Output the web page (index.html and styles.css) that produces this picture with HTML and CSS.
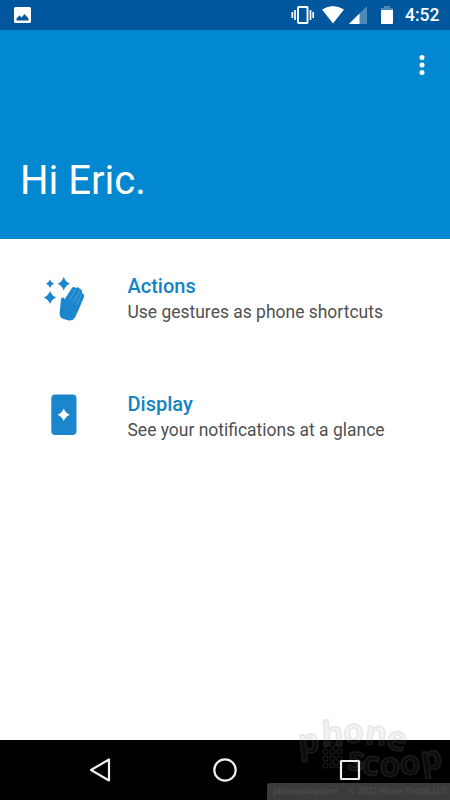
FILE: index.html
```html
<!DOCTYPE html>
<html lang="en">
<head>
<meta charset="utf-8">
<title>Hi Eric.</title>
<link rel="stylesheet" href="styles.css">
</head>
<body>
<div class="phone">
  <div class="status">
    <svg class="photo" viewBox="0 0 17 16" width="17" height="16"><rect width="17" height="16" rx="1.5" fill="#fff"/><path d="M2.500 13.500v-2l3-3 2 2 3-3.500 4 4.500v2z" fill="#00579d"/></svg>
    <svg class="vibrate" viewBox="0 0 24 18" width="24" height="18" fill="none" stroke="#fff"><rect x="7" y="1" width="9.500" height="16" rx=".5" stroke-width="1.900"/><path d="M1.300 6v6M4 4v10M19.500 4v10M22.200 6v6" stroke-width="1.700"/></svg>
    <svg class="wifi" viewBox="0 0 22 18" width="22" height="18"><path d="M0 3.500Q11-3.500 22 3.500L11 17.500z" fill="#fff"/></svg>
    <svg class="signal" viewBox="0 0 18 18" width="18" height="18"><path d="M18 0v18H0z" fill="#4d8aba"/><path d="M10.500 7.500V18H0z" fill="#fff"/></svg>
    <svg class="battery" viewBox="0 0 12 18" width="12" height="18"><path d="M0 4V2h3V0h6v2h3v2z" fill="#4d8aba"/><path d="M0 4h12v13q0 1-1 1H1q-1 0-1-1z" fill="#fff"/></svg>
    <span class="time">4:52</span>
  </div>
  <header class="hero">
    <svg class="more" viewBox="0 0 6 20" width="6" height="20" fill="#fff"><circle cx="3" cy="2.500" r="2.500"/><circle cx="3" cy="10" r="2.500"/><circle cx="3" cy="17.500" r="2.500"/></svg>
    <h1 class="greeting">Hi Eric.</h1>
  </header>
  <main class="list">
    <section class="item">
      <svg class="icon" viewBox="0 0 60 60" width="60" height="60" fill="#1b86cb">
        <path d="M15 9.500Q16 12.700 19 13.700Q16 14.700 15 18Q14 14.700 11 13.700Q14 12.700 15 9.500zM28.700 7Q30.500 12 35 13.700Q30.500 15.500 28.700 20.500Q27 15.500 22.500 13.700Q27 12 28.700 7zM15 21Q16.800 25.800 21.300 27.500Q16.800 29.200 15 34Q13.200 29.200 8.700 27.500Q13.200 25.800 15 21z"/>
        <path d="M25 46Q24.300 43 25 39.500L26 29.500Q26.500 27 28.500 27.500Q29.500 28 29.500 29.500L36.500 18.500Q38.500 16 40.700 18Q43.500 16 45 19Q47.800 19.500 46.800 23Q50.200 24 48.800 27.500L43.500 40L40 47.500Q37.500 51.500 33 50.300L28 48.700Q25.500 48 25 46z"/>
        <path d="M40.800 19L34.500 30M44.800 20.500L38 33M46.800 24L41.500 35" fill="none" stroke="#6fb3dd" stroke-width=".6"/>
      </svg>
      <div class="copy"><h2>Actions</h2><p>Use gestures as phone shortcuts</p></div>
    </section>
    <section class="item">
      <svg class="icon" viewBox="0 0 60 60" width="60" height="60"><rect x="16.300" y="6.500" width="25.200" height="40.500" rx="4" fill="#1b86cb"/><path d="M28.700 20.500Q30.500 25 35 26.800Q30.500 28.500 28.700 33Q27 28.500 22.500 26.800Q27 25 28.700 20.500z" fill="#fff"/></svg>
      <div class="copy"><h2>Display</h2><p>See your notifications at a glance</p></div>
    </section>
  </main>
  <nav class="nav">
    <svg viewBox="0 0 24 24" width="24" height="24"><path d="M21 1.500v21L3 12z"/></svg>
    <svg viewBox="0 0 24 24" width="24" height="24"><circle cx="12" cy="12" r="10.700"/></svg>
    <svg viewBox="0 0 24 24" width="24" height="24"><rect x="3" y="3" width="18" height="18" rx=".5"/></svg>
  </nav>
  <svg class="mark" viewBox="0 0 195 95" width="195" height="95">
    <defs>
      <pattern id="dots" x="67" y="36" width="7" height="7" patternUnits="userSpaceOnUse"><circle cx="3.500" cy="3.500" r="2.600" class="dot"/></pattern>
    </defs>
    <text class="logo" x="44 67 88 109 130" y="49 41 38 39 43" rotate="-6 -3 0 5 12">phone</text>
    <rect x="67" y="36" width="21" height="28" fill="url(#dots)"/>
    <text class="logo" x="91 106 124 145 167" y="64 69 71 70 66" rotate="10 6 2 -3 -8">scoop</text>
    <path d="M12 95V81q0-3 3-3H195V95z" fill="#3b3b3b"/>
    <text class="legal" x="18" y="89" textLength="65">phonescoop.com</text>
    <text class="legal" x="93" y="89" textLength="99">© 2022 Phone Factor, LLC</text>
  </svg>
</div>
</body>
</html>
```
FILE: styles.css
```css
* { box-sizing: border-box; margin: 0; padding: 0; }
body { font-family: Roboto, sans-serif; background: #fff; }
svg { display: block; flex: none; }
.phone { position: relative; width: 450px; height: 800px; display: flex; flex-direction: column; overflow: hidden; }
.status { height: 30px; background: #00579d; display: flex; align-items: center; padding: 0 11px 0 14px; color: #fff; }
.vibrate { margin-left: auto; }
.wifi { margin-left: 7px; }
.signal { margin-left: 5px; }
.battery { margin-left: 14px; }
.time { width: 34px; margin-left: 12px; font-size: 17.5px; font-weight: 500; line-height: 32px; white-space: nowrap; }
.hero { height: 209px; background: #0288d1; display: flex; flex-direction: column; padding: 25px 25px 0 20px; color: #fff; }
.more { align-self: flex-end; }
.greeting { margin-top: 82px; font-size: 40px; font-weight: 400; line-height: 47px; }
.list { flex: 1; padding-top: 31px; }
.item { display: flex; height: 117.5px; padding-left: 35px; }
.copy { margin-left: 32.5px; padding-top: 3px; white-space: nowrap; }
h2 { color: #1283c6; font-size: 20px; font-weight: 500; line-height: 26px; }
p { color: #505050; font-size: 17.48px; line-height: 26px; }
.nav { height: 60px; background: #000; display: flex; align-items: center; gap: 101px; padding-left: 88px; }
.nav svg { position: relative; z-index: 2; fill: none; stroke: #eee; stroke-width: 2.2; stroke-linejoin: round; }
.mark { position: absolute; z-index: 1; right: 0; bottom: 0; }
.logo { font: 700 34px "Open Sans", sans-serif; fill: rgba(128,128,128,.1); stroke: rgba(135,135,135,.18); stroke-width: 1.5; }
.dot { fill: none; stroke: #222; stroke-width: 1; }
.legal { font: 700 8px "DejaVu Sans", sans-serif; fill: #484848; }
```
